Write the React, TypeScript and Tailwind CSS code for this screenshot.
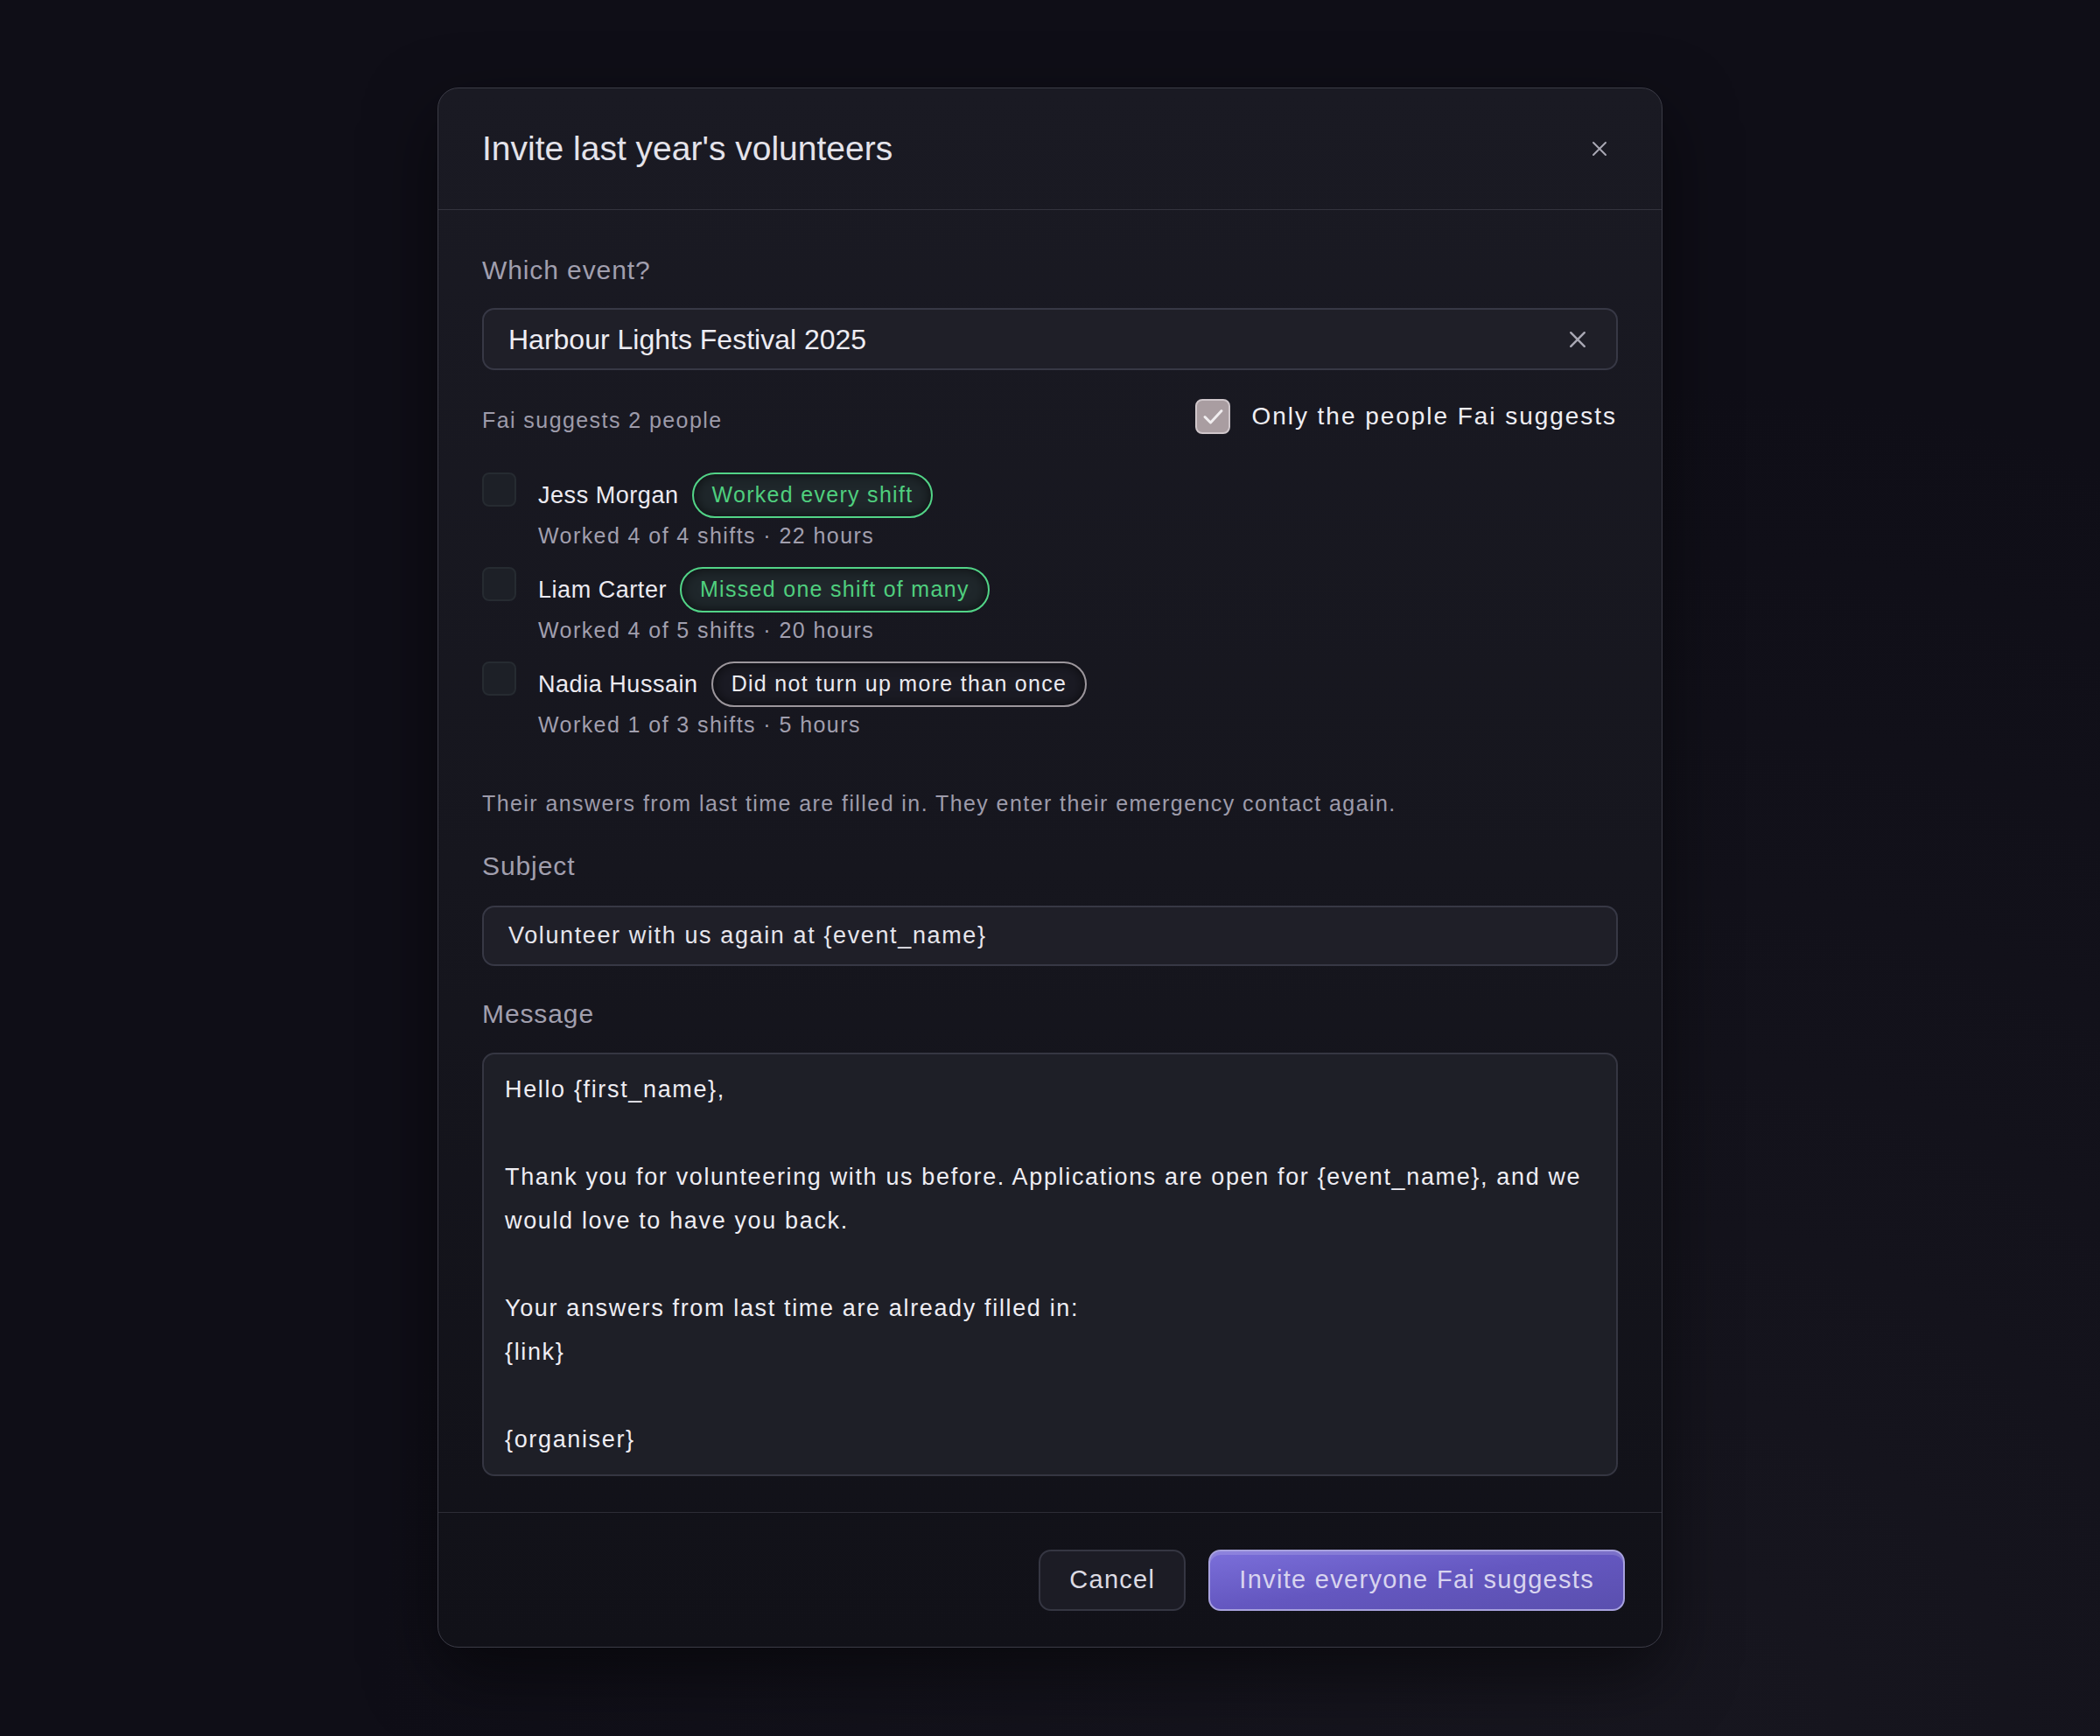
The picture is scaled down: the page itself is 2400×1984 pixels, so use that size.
import React from "react";

type Person = {
  name: string;
  tag: string;
  tone: "good" | "plain";
  detail: string;
};

const people: Person[] = [
  { name: "Jess Morgan", tag: "Worked every shift", tone: "good", detail: "Worked 4 of 4 shifts · 22 hours" },
  { name: "Liam Carter", tag: "Missed one shift of many", tone: "good", detail: "Worked 4 of 5 shifts · 20 hours" },
  { name: "Nadia Hussain", tag: "Did not turn up more than once", tone: "plain", detail: "Worked 1 of 3 shifts · 5 hours" },
];

const message = `Hello {first_name},

Thank you for volunteering with us before. Applications are open for {event_name}, and we would love to have you back.

Your answers from last time are already filled in:
{link}

{organiser}`;

function CrossIcon({ size }: { size: number }) {
  return (
    <svg width={size} height={size} viewBox="0 0 18 18" fill="none" stroke="currentColor" strokeWidth={2} strokeLinecap="round">
      <path d="M2 2L16 16M16 2L2 16" />
    </svg>
  );
}

function FieldLabel({ children }: { children: React.ReactNode }) {
  return <div className="h-[40px] leading-[40px] text-[30px] tracking-[0.03em] text-[#a19fae]">{children}</div>;
}

function PersonRow({ p }: { p: Person }) {
  const pill =
    p.tone === "good"
      ? "border-[#52d487] text-[#4fcf7e] bg-[#1f272b]"
      : "border-[#9c969c] text-[#ecebf1] bg-[#1b1b24]";
  return (
    <div className="flex items-start gap-[25px]">
      <div className="w-[39px] h-[39px] rounded-[8px] border-2 border-[#262b31] bg-[#1d2027] shrink-0" />
      <div className="flex flex-col">
        <div className="flex items-center h-[52px] gap-[15px]">
          <span className="text-[27px] tracking-[0.02em] text-[#eceaf1]">{p.name}</span>
          <span
            className={`h-[52px] flex items-center px-[21px] rounded-full border-2 text-[25px] tracking-[0.052em] shadow-[inset_0_0_14px_rgba(0,0,0,0.65)] ${pill}`}
          >
            {p.tag}
          </span>
        </div>
        <div className="h-[40px] leading-[40px] text-[25px] tracking-[0.057em] text-[#a19fae]">{p.detail}</div>
      </div>
    </div>
  );
}

export default function App() {
  return (
    <div className="min-h-screen w-full flex justify-center pt-[100px] pb-[100px] bg-[#0f0e17] bg-[radial-gradient(ellipse_at_80%_100%,#17161f_0%,#0f0e17_55%)] font-['Liberation_Sans',Arial,sans-serif]">
      <div className="w-[1400px] h-[1783px] rounded-[24px] border border-[#3b3b46] bg-gradient-to-b from-[#1a1a23] via-[#16161e] to-[#111118] flex flex-col overflow-hidden shadow-[0_30px_80px_rgba(0,0,0,0.5)]">
        {/* header */}
        <div className="h-[139px] shrink-0 px-[50px] flex items-center justify-between border-b border-[#33333d]">
          <h2 className="text-[39px] text-[#e4e3ea] font-normal">Invite last year's volunteers</h2>
          <button className="w-[36px] h-[36px] flex items-center justify-center text-[#a9a8b4] mr-[3px]">
            <CrossIcon size={18} />
          </button>
        </div>

        {/* body */}
        <div className="flex-1 px-[50px] pt-[49px] flex flex-col">
          <FieldLabel>Which event?</FieldLabel>
          <div className="mt-[23px] h-[71px] rounded-[14px] border-2 border-[#373845] bg-[#1f1f28] flex items-center justify-between pl-[28px] pr-[34px]">
            <span className="text-[32px] text-[#eeedf3]">Harbour Lights Festival 2025</span>
            <span className="text-[#a9a8b4]">
              <svg width="20" height="20" viewBox="0 0 18 18" fill="none" stroke="currentColor" strokeWidth={2.2} strokeLinecap="round">
                <path d="M2 2L16 16M16 2L2 16" />
              </svg>
            </span>
          </div>

          <div className="mt-[33px] h-[40px] flex items-center justify-between">
            <span className="mt-[10px] text-[25px] tracking-[0.057em] text-[#9d9baa]">Fai suggests 2 people</span>
            <label className="flex items-center gap-[24px] mr-[1px]">
              <span className="w-[40px] h-[40px] rounded-[8px] border-2 border-[#cfc6ca] bg-[#a99da1] flex items-center justify-center">
                <svg width="30" height="30" viewBox="0 0 30 30" fill="none" stroke="#f1eef0" strokeWidth={3} strokeLinecap="round" strokeLinejoin="round">
                  <path d="M6 15.5L12.5 22L25 8.5" />
                </svg>
              </span>
              <span className="text-[28px] tracking-[0.07em] text-[#efeef3]">Only the people Fai suggests</span>
            </label>
          </div>

          <div className="mt-[44px] flex flex-col gap-[16px]">
            {people.map((p) => (
              <PersonRow key={p.name} p={p} />
            ))}
          </div>

          <p className="mt-[52px] h-[36px] leading-[36px] text-[25px] tracking-[0.057em] text-[#9d9baa]">
            Their answers from last time are filled in. They enter their emergency contact again.
          </p>

          <div className="mt-[34px]">
            <FieldLabel>Subject</FieldLabel>
          </div>
          <div className="mt-[25px] h-[69px] rounded-[14px] border-2 border-[#373845] bg-[#1f1f28] flex items-center pl-[28px]">
            <span className="text-[27px] tracking-[0.06em] text-[#e6e5ec]">Volunteer with us again at {"{event_name}"}</span>
          </div>

          <div className="mt-[35px]">
            <FieldLabel>Message</FieldLabel>
          </div>
          <div className="mt-[24px] h-[484px] rounded-[14px] border-2 border-[#353642] bg-[#1e1f27] pl-[24px] pr-[20px] pt-[15px] pb-[18px] whitespace-pre-wrap text-[27px] leading-[50px] tracking-[0.061em] text-[#eeedf3]">
            {message}
          </div>
        </div>

        {/* footer */}
        <div className="h-[154px] shrink-0 border-t border-[#2c2c36] flex items-center justify-end gap-[26px] pr-[42px]">
          <button className="h-[70px] px-[33px] rounded-[14px] border-2 border-[#353642] bg-[#1c1c25] text-[29px] tracking-[0.045em] text-[#dcdbe3]">
            Cancel
          </button>
          <button className="h-[70px] px-[33px] rounded-[14px] border-2 border-[#a7a1de] bg-gradient-to-br from-[#7b6fda] via-[#6457c0] to-[#5a4fae] text-[29px] tracking-[0.045em] text-[#d8d4ef] shadow-[inset_0_4px_0_rgba(255,255,255,0.15)]">
            Invite everyone Fai suggests
          </button>
        </div>
      </div>
    </div>
  );
}
